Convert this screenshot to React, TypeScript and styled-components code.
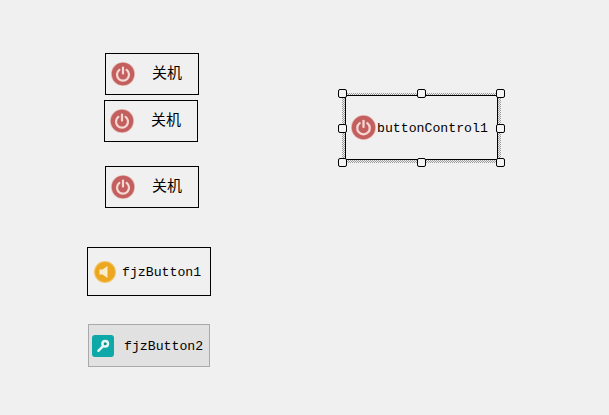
import styled, { createGlobalStyle } from "styled-components";

const GlobalStyle = createGlobalStyle`
  html, body {
    margin: 0;
    padding: 0;
    background: #f0f0f0;
  }
`;

const PowerIcon = ({ size }: { size: number }) => (
  <svg width={size} height={size} viewBox="0 0 24 24">
    <circle cx="12" cy="12" r="12" fill="#e6b8b4" />
    <circle cx="12" cy="12" r="11.2" fill="#c45f5f" />
    <path
      d="M8.4 7.8a6 6 0 1 0 7.2 0"
      fill="none"
      stroke="#f6d8d2"
      strokeWidth="2.2"
      strokeLinecap="round"
    />
    <path d="M12 5.6v6" stroke="#f6d8d2" strokeWidth="2.2" strokeLinecap="round" />
  </svg>
);

const SpeakerIcon = () => (
  <svg width="22" height="22" viewBox="0 0 22 22">
    <circle cx="11" cy="11" r="11" fill="#f3c568" />
    <circle cx="11" cy="11" r="10" fill="#eba71f" />
    <path d="M5.5 8.6h3L13.5 5v12l-5-3.6h-3z" fill="#fbeccb" />
  </svg>
);

const KeyIcon = () => (
  <svg width="22" height="22" viewBox="0 0 22 22">
    <rect width="22" height="22" rx="3" fill="#0fa8a8" />
    <circle cx="13.2" cy="8.8" r="4" fill="#e6f7f5" />
    <circle cx="13.2" cy="8.8" r="1.5" fill="#0d8f8f" />
    <path d="M10.6 11.6L6.4 15.8" stroke="#e6f7f5" strokeWidth="2.4" strokeLinecap="round" />
  </svg>
);

const App = () => {
  return (
    <Canvas>
      <GlobalStyle />
      <LeftColumn>
        <PowerButton $indent={18}>
          <PowerIcon size={24} />
          <CjkLabel>关机</CjkLabel>
        </PowerButton>
        <PowerButton $indent={17} $gap={5}>
          <PowerIcon size={24} />
          <CjkLabel>关机</CjkLabel>
        </PowerButton>
        <PowerButton $indent={18} $gap={24}>
          <PowerIcon size={24} />
          <CjkLabel>关机</CjkLabel>
        </PowerButton>
        <FjzButton>
          <SpeakerIcon />
          <MonoLabel>fjzButton1</MonoLabel>
        </FjzButton>
        <FjzButtonPressed>
          <KeyIcon />
          <MonoLabel>fjzButton2</MonoLabel>
        </FjzButtonPressed>
      </LeftColumn>

      <Selection>
        <HatchFrame>
          <SelectedControl>
            <PowerIcon size={25} />
            <MonoLabel>buttonControl1</MonoLabel>
          </SelectedControl>
        </HatchFrame>
        <HandleGrid>
          <Handle />
          <Handle />
          <Handle />
          <Handle />
          <span />
          <Handle />
          <Handle />
          <Handle />
          <Handle />
        </HandleGrid>
      </Selection>
    </Canvas>
  );
};

const Canvas = styled.div`
  width: 609px;
  height: 415px;
  overflow: hidden;
  background: #f0f0f0;
  display: flex;
  align-items: flex-start;
`;

const LeftColumn = styled.div`
  width: 338px;
  box-sizing: border-box;
  padding: 53px 0 0 87px;
  display: flex;
  flex-direction: column;
  align-items: flex-start;
`;

const PowerButton = styled.div<{ $indent: number; $gap?: number }>`
  box-sizing: border-box;
  width: 94px;
  height: 42px;
  margin-left: ${(p) => p.$indent}px;
  margin-top: ${(p) => p.$gap ?? 0}px;
  border: 1px solid #000;
  display: flex;
  align-items: center;
  padding-left: 5px;
  gap: 17px;
`;

const FjzButton = styled.div`
  box-sizing: border-box;
  width: 124px;
  height: 49px;
  margin-top: 39px;
  border: 1px solid #000;
  display: flex;
  align-items: center;
  padding-left: 6px;
  gap: 6px;
`;

const FjzButtonPressed = styled(FjzButton)`
  width: 122px;
  height: 43px;
  margin: 28px 0 0 1px;
  border-color: #a9a9a9;
  background: #e1e1e1;
  padding-left: 3px;
  gap: 10px;
`;

const CjkLabel = styled.span`
  font: 15px/20px "Noto Sans CJK SC", sans-serif;
  color: #000;
  padding-bottom: 4px;
`;

const MonoLabel = styled.span`
  font: 13.2px "Liberation Mono", monospace;
  color: #000;
  white-space: nowrap;
  padding-top: 2px;
`;

const Selection = styled.div`
  position: relative;
  width: 167px;
  height: 78px;
  margin-top: 89px;
  box-sizing: border-box;
  padding: 4px;
`;

const HatchFrame = styled.div`
  box-sizing: border-box;
  height: 70px;
  padding: 2px 3px 3px 3px;
  background-image: repeating-conic-gradient(#9a9a9a 0 25%, #f0f0f0 0 50%);
  background-size: 2px 2px;
`;

const SelectedControl = styled.div`
  box-sizing: border-box;
  height: 65px;
  border: 1px solid #000;
  background: #f0f0f0;
  display: flex;
  align-items: center;
  padding-left: 5px;
  gap: 1px;
`;

const HandleGrid = styled.div`
  position: absolute;
  inset: 0;
  display: grid;
  grid-template-columns: repeat(3, 9px);
  grid-template-rows: repeat(3, 9px);
  justify-content: space-between;
  align-content: space-between;
`;

const Handle = styled.div`
  box-sizing: border-box;
  border: 1px solid #000;
  border-radius: 2px;
  background: #f4f4f4;
`;

export default App;
